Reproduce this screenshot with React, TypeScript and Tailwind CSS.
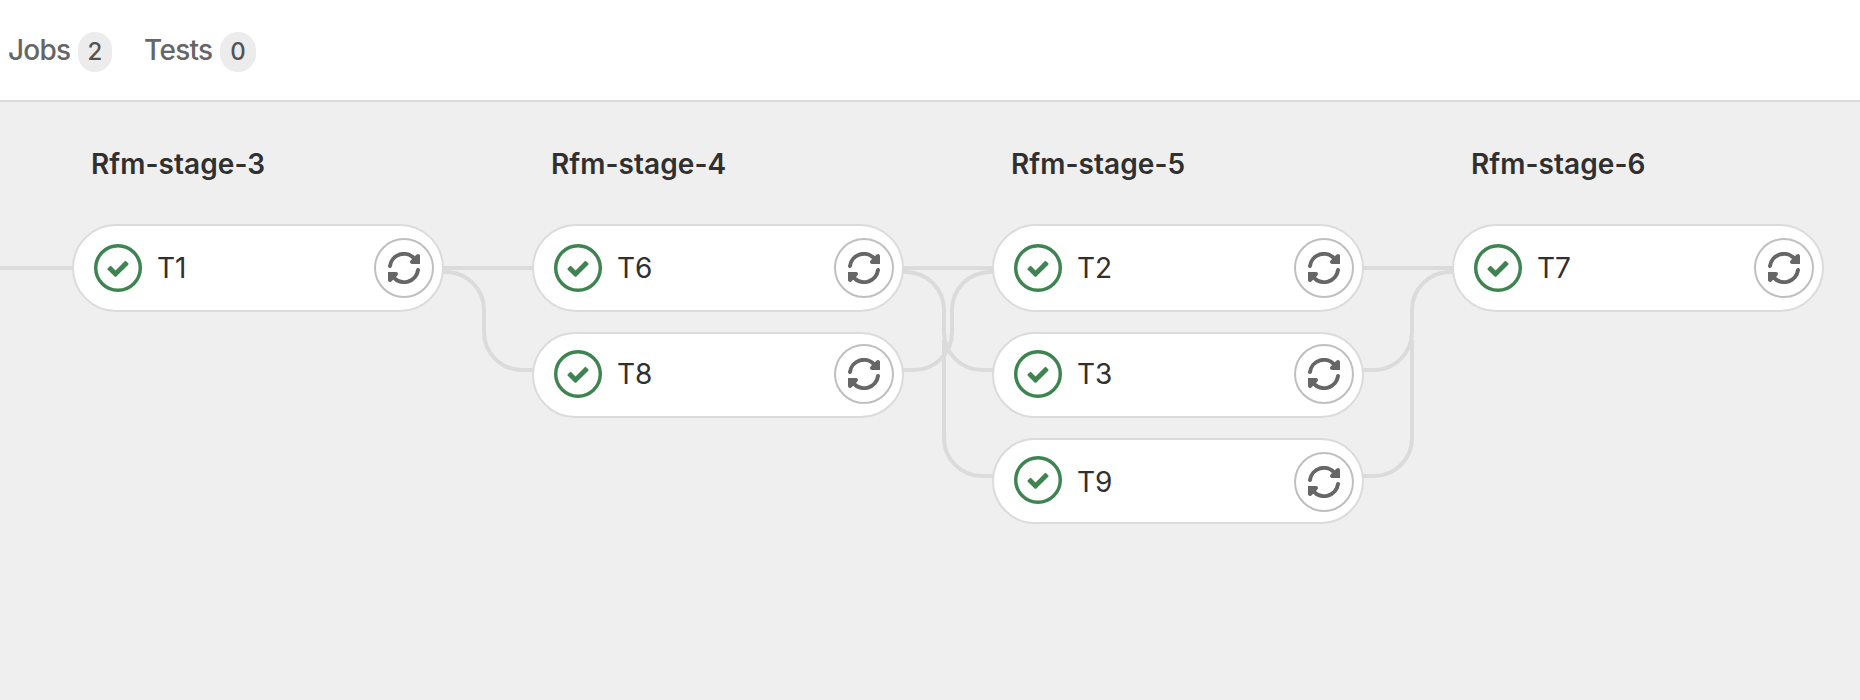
type Job = { name: string; pill: string; check: string; label: string; retry: string };
type Stage = { title: string; jobs: string[] };

const stages: Stage[] = [
  { title: "Rfm-stage-3", jobs: ["T1"] },
  { title: "Rfm-stage-4", jobs: ["T6", "T8"] },
  { title: "Rfm-stage-5", jobs: ["T2", "T3", "T9"] },
  { title: "Rfm-stage-6", jobs: ["T7"] },
];

const rows: Omit<Job, "name">[] = [
  { pill: "h-[88px]", check: "mt-[18px]", label: "mt-[24px]", retry: "mt-[12px]" },
  { pill: "h-[86px] mt-[20px]", check: "mt-[16px]", label: "mt-[22px]", retry: "mt-[10px]" },
  { pill: "h-[86px] mt-[20px]", check: "mt-[16px]", label: "mt-[24px]", retry: "mt-[12px]" },
];

const links = [
  "M0 268H80",
  "M440 268H540",
  "M440 272H446A38 38 0 0 1 484 310V332A38 38 0 0 0 522 370H540",
  "M900 268H1000",
  "M900 272H906A38 38 0 0 1 944 310V332A38 38 0 0 0 982 370H1000",
  "M944 340V438A38 38 0 0 0 982 476H1000",
  "M1000 272H990A38 38 0 0 0 952 310V332A38 38 0 0 1 914 370H900",
  "M1360 268H1460",
  "M1460 272H1450A38 38 0 0 0 1412 310V332A38 38 0 0 1 1374 370H1360",
  "M1412 340V438A38 38 0 0 1 1374 476H1360",
];

function SuccessIcon({ className }: { className: string }) {
  return (
    <svg viewBox="0 0 14 14" className={`size-12 shrink-0 text-[#3d8450] ${className}`}>
      <circle cx="7" cy="7" r="6.5" fill="none" stroke="currentColor" />
      <path
        fill="currentColor"
        d="M6.278 7.697L5.045 6.464a.296.296 0 0 0-.42-.002l-.613.614a.298.298 0 0 0 .002.42l1.91 1.909a.5.5 0 0 0 .703.005l.265-.265L9.997 6.04a.291.291 0 0 0-.009-.408l-.614-.614a.29.29 0 0 0-.408-.009L6.278 7.697z"
      />
    </svg>
  );
}

function RetryArrow() {
  return (
    <>
      <path d="M2 14A14 14 0 0 1 26.6 6.9" fill="none" stroke="currentColor" strokeWidth="4" strokeLinecap="round" />
      <path d="M32 4V12H24C22 12 21.4 9.8 22.6 8.6L28.6 2.6C29.9 1.4 32 2.2 32 4Z" fill="currentColor" />
    </>
  );
}

function RetryIcon() {
  return (
    <svg viewBox="0 0 32 32" className="size-8 text-[#666666]">
      <RetryArrow />
      <g transform="rotate(180 16 16)">
        <RetryArrow />
      </g>
    </svg>
  );
}

function JobPill({ name, pill, check, label, retry }: Job) {
  return (
    <div className={`flex w-[372px] items-start rounded-[44px] border-2 border-[#dbdbdb] bg-white pl-5 pr-2 ${pill}`}>
      <SuccessIcon className={check} />
      <span className={`ml-[15px] text-[28px] leading-[36px] text-[#303030] [font-kerning:none] ${label}`}>{name}</span>
      <button className={`ml-auto flex size-[60px] items-center justify-center rounded-full border-2 border-[#bfbfbf] bg-white ${retry}`}>
        <RetryIcon />
      </button>
    </div>
  );
}

function Count({ value, width }: { value: number; width: string }) {
  return (
    <span className={`flex h-10 items-center justify-center rounded-[20px] bg-[#ececec] text-[24px] font-[450] text-[#535353] ${width}`}>
      {value}
    </span>
  );
}

export default function App() {
  return (
    <div className="flex h-[700px] w-[1860px] flex-col overflow-hidden bg-[#efefef] font-['Inter',sans-serif]">
      <header className="flex h-[102px] shrink-0 items-start border-b-2 border-[#dbdbdb] bg-white pl-2 pt-8 text-[28px] font-[450] text-[#666666]">
        <div className="flex w-[136px]">
          <span className="w-[70px] leading-[36px] tracking-[-0.8px]">Jobs</span>
          <Count value={2} width="w-[34px]" />
        </div>
        <div className="flex">
          <span className="w-[76px] leading-[36px] tracking-[-0.7px]">Tests</span>
          <Count value={0} width="w-9" />
        </div>
      </header>
      <main className="relative flex grow gap-[88px] pl-[72px] pt-[44px]">
        <svg viewBox="0 102 1860 598" className="absolute left-0 top-0 h-[598px] w-[1860px]">
          <g fill="none" stroke="#dbdbdb" strokeWidth="4">
            {links.map((d) => (
              <path key={d} d={d} />
            ))}
          </g>
        </svg>
        {stages.map((stage) => (
          <section key={stage.title} className="relative w-[372px] shrink-0">
            <h2 className="mb-[42px] pl-[19px] text-[28px] font-semibold leading-[36px] tracking-[0.05px] text-[#303030]">{stage.title}</h2>
            {stage.jobs.map((name, i) => (
              <JobPill key={name} name={name} {...rows[i]} />
            ))}
          </section>
        ))}
      </main>
    </div>
  );
}
